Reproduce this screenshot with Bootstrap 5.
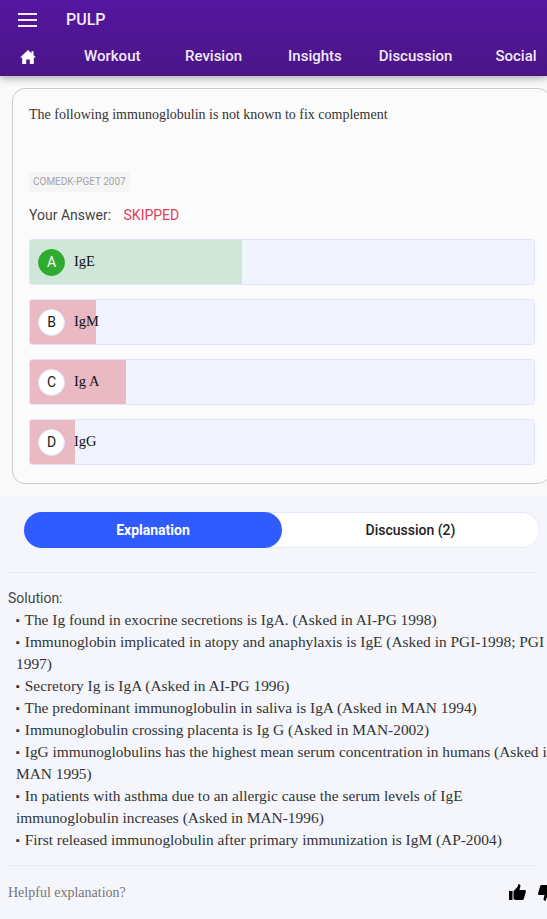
<!DOCTYPE html>
<html lang="en"><head><meta charset="utf-8"><title>PULP</title>
<link href="https://cdn.jsdelivr.net/npm/bootstrap@5.3.0/dist/css/bootstrap.min.css" rel="stylesheet">
<style>
html,body{overflow:hidden;height:919px;width:547px}
body{background:#fafafa;font-family:Roboto,sans-serif;color:#212529}
.app-head{height:76px;background:linear-gradient(180deg,#55169f,#4a1587);color:#f1eaf8;box-shadow:0 2px 8px rgba(0,0,0,.35);position:relative;z-index:2}
.head-top{height:39px;padding-left:18px}
.burger{width:19px;height:14px;display:flex;flex-direction:column;justify-content:space-between}
.burger i{display:block;height:2px;background:#f1eaf8}
.brand{margin-left:29px;font-size:16px;font-weight:500;line-height:1}
.head-nav{height:35px;font-size:15px;font-weight:500;white-space:nowrap}
.head-nav svg{margin-left:20px;margin-right:48px;flex:none}
.head-nav span{flex:none}
.nav-w{width:58px}
.nav-gap-a{margin-left:43px}
.nav-gap-b{margin-left:46px}
.nav-gap-c{margin-left:37px}
.qbox{margin:12px -4px 12px 12px;height:396px;border:1px solid #ccc;border-radius:13px;background:#fbfbfb;padding:16px 16px 0}
.stem,.sol-item,.opt-text,.helpful{font-family:"Liberation Serif",serif}
.stem{font-size:14px;line-height:20px;color:#333;height:63px}
.tag{display:inline-block;background:#f5f5f5;color:#a3a3a3;font-size:10px;font-weight:400;line-height:20px;padding:0 4px;border-radius:2px}
.ans{font-size:14px;line-height:20px;margin-top:13px;color:#444}
.ans b{font-weight:400;color:#e0405a;margin-left:9px}
.opt{position:relative;width:506px;height:46px;margin-top:14px;background:#f1f4fd;border:1px solid #e1e7fb;border-radius:3px;overflow:hidden}
.opt-fill{position:absolute;left:0;top:0;bottom:0}
.opt-row{position:relative;height:100%;padding-left:8px;gap:9px}
.opt-letter{width:27px;height:27px;border-radius:50%;background:#fff;border:1px solid #e1e7fb;font-size:14px;color:#222;flex:none}
.opt-letter.ok{background:#2fac2f;border-color:#2fac2f;color:#fff}
.opt-text{font-size:14.5px;color:#111}
.lower{background:#f4f6fb;height:423px;padding:16px 8px 0}
.tabs{margin:0 -1px 0 16px;height:36px;width:516px;background:#fff;border:1px solid #e1e7fb;border-radius:18px;font-size:14px;font-weight:500;color:#222}
.tab-on{width:258px;margin:-1px 0 -1px -1px;background:#2f5bff;color:#fff;border-radius:18px;font-weight:700}
.tab-off{flex:1}
.rule{border-top:1px solid #e9ecf5;height:0}
.sol{width:552px;margin-top:14px;color:#444;font-size:14px;font-weight:400;line-height:22px}
.sol-item{margin:0 0 0 8px;font-size:15.4px;line-height:22px;color:#333;font-weight:400}
.bul{font-size:11px;vertical-align:1px;margin-right:1px}
.helpful{font-size:14px;color:#777;white-space:nowrap}
.thumbs{gap:12px;flex:none}
</style></head>
<body>
<header class="app-head">
 <div class="head-top d-flex align-items-center"><div class="burger"><i></i><i></i><i></i></div><div class="brand">PULP</div></div>
 <nav class="head-nav d-flex align-items-center">
  <svg width="16" height="14" viewBox="0 0 16 14"><path fill="#fff" d="M8 0 0 7.400h2.200V14h4V9.400h3.600V14h4V7.400H16L13.500 5V1.200h-2v2z"/></svg>
  <span class="nav-w">Workout</span><span class="nav-gap-a">Revision</span><span class="nav-gap-b">Insights</span><span class="nav-gap-c">Discussion</span><span class="nav-gap-a">Social</span>
 </nav>
</header>
<section class="qbox">
 <div class="stem">The following immunoglobulin is not known to fix complement</div>
 <span class="tag">COMEDK-PGET 2007</span>
 <div class="ans">Your Answer: <b>SKIPPED</b></div>
 <div class="opt"><div class="opt-fill" style="width:212px;background:#cfe6d8"></div><div class="opt-row d-flex align-items-center"><div class="opt-letter ok d-flex align-items-center justify-content-center">A</div><div class="opt-text">IgE</div></div></div>
 <div class="opt"><div class="opt-fill" style="width:66px;background:#e9bac3"></div><div class="opt-row d-flex align-items-center"><div class="opt-letter d-flex align-items-center justify-content-center">B</div><div class="opt-text">IgM</div></div></div>
 <div class="opt"><div class="opt-fill" style="width:96px;background:#e9bac3"></div><div class="opt-row d-flex align-items-center"><div class="opt-letter d-flex align-items-center justify-content-center">C</div><div class="opt-text">Ig A</div></div></div>
 <div class="opt"><div class="opt-fill" style="width:45px;background:#e9bac3"></div><div class="opt-row d-flex align-items-center"><div class="opt-letter d-flex align-items-center justify-content-center">D</div><div class="opt-text">IgG</div></div></div>
</section>
<section class="lower">
 <div class="tabs d-flex"><div class="tab-on d-flex align-items-center justify-content-center">Explanation</div><div class="tab-off d-flex align-items-center justify-content-center">Discussion (2)</div></div>
 <div class="rule" style="margin-top:24px"></div>
 <div class="sol">Solution:
  <p class="sol-item"><span class="bul">▪</span> The Ig found in exocrine secretions is IgA. (Asked in AI-PG 1998)</p>
  <p class="sol-item"><span class="bul">▪</span> Immunoglobin implicated in atopy and anaphylaxis is IgE (Asked in PGI-1998; PGI 1997)</p>
  <p class="sol-item"><span class="bul">▪</span> Secretory Ig is IgA (Asked in AI-PG 1996)</p>
  <p class="sol-item"><span class="bul">▪</span> The predominant immunoglobulin in saliva is IgA (Asked in MAN 1994)</p>
  <p class="sol-item"><span class="bul">▪</span> Immunoglobulin crossing placenta is Ig G (Asked in MAN-2002)</p>
  <p class="sol-item"><span class="bul">▪</span> IgG immunoglobulins has the highest mean serum concentration in humans (Asked in MAN 1995)</p>
  <p class="sol-item"><span class="bul">▪</span> In patients with asthma due to an allergic cause the serum levels of IgE immunoglobulin increases (Asked in MAN-1996)</p>
  <p class="sol-item"><span class="bul">▪</span> First released immunoglobulin after primary immunization is IgM (AP-2004)</p>
 </div>
 <div class="rule" style="margin-top:14px"></div>
 <div class="d-flex align-items-center justify-content-between" style="width:547px;margin-top:16px">
  <div class="helpful">Helpful explanation?</div>
  <div class="thumbs d-flex"><svg width="17" height="17" viewBox="0 0 17 17"><path d="M0 7h3.500v9H0zM4.500 7.200 8.500 3 9.500 0c1.800.3 2.400 1.700 1.600 3.600L10.500 6H15.500c1.200 0 1.700 1 1.300 2l-2 7c-.3.700-.8 1-1.500 1H6.500L4.500 15z"/></svg><svg width="17" height="17" viewBox="0 0 17 17" style="transform:rotate(180deg)"><path d="M0 7h3.500v9H0zM4.500 7.200 8.500 3 9.500 0c1.800.3 2.400 1.700 1.600 3.600L10.500 6H15.500c1.200 0 1.700 1 1.300 2l-2 7c-.3.700-.8 1-1.500 1H6.500L4.500 15z"/></svg></div>
 </div>
</section>
<script src="https://cdn.jsdelivr.net/npm/bootstrap@5.3.0/dist/js/bootstrap.bundle.min.js"></script>
</body></html>
